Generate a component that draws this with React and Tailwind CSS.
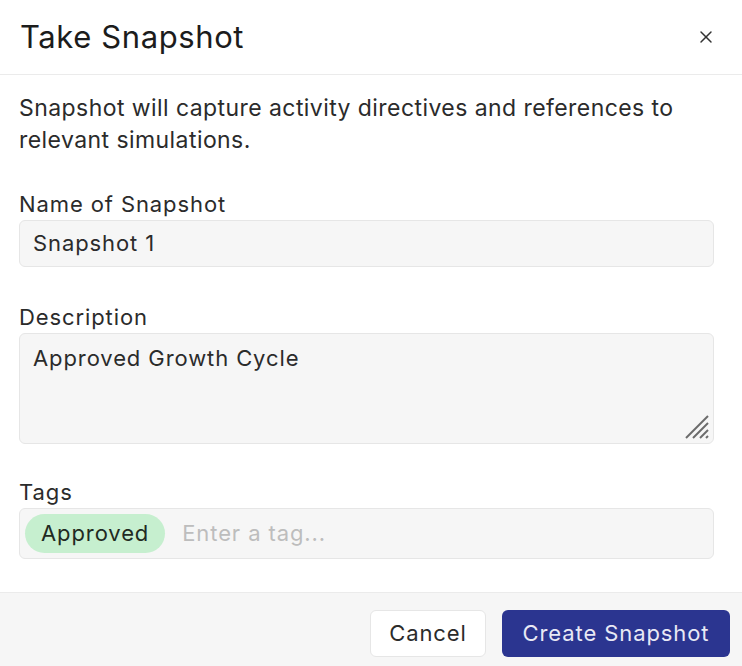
import { X } from 'lucide-react'

function Field({ label, children, className = '' }) {
  return (
    <div className={`flex flex-col ${className}`}>
      <label className="text-[22px] leading-[28px] tracking-[0.9px] text-[#2b2b2b] mb-[2px]">{label}</label>
      {children}
    </div>
  )
}

export default function App() {
  return (
    <div className="w-[742px] h-[666px] bg-white flex flex-col font-['Inter',sans-serif] text-[#2b2b2b]">
      <div className="h-[75px] flex items-center justify-between pl-[20px] pr-[26px] border-b border-[#ebebeb]">
        <h1 className="text-[31px] tracking-[0.6px] text-[#1c1c1c]">Take Snapshot</h1>
        <X className="w-[20px] h-[20px] text-[#333]" strokeWidth={1.75} />
      </div>
      <div className="flex-1 px-[19px] pt-[17px]">
        <p className="text-[23px] leading-[32px] tracking-[0.43px]">
          Snapshot will capture activity directives and references to relevant simulations.
        </p>
        <Field label="Name of Snapshot" className="mt-[34px]">
          <div className="h-[47px] w-[695px] rounded-[6px] bg-[#f6f6f6] border border-[#e6e6e6] flex items-center px-[13px] text-[22px] tracking-[0.9px]">
            Snapshot 1
          </div>
        </Field>
        <Field label="Description" className="mt-[36px]">
          <div className="relative h-[111px] w-[695px] rounded-[6px] bg-[#f6f6f6] border border-[#e6e6e6] px-[13px] pt-[8px] text-[22px] tracking-[0.9px]">
            Approved Growth Cycle
            <svg className="absolute right-[3px] bottom-[3px]" width="26" height="26" viewBox="0 0 26 26">
              <g stroke="#6b6b6b" strokeWidth="2">
                <line x1="2" y1="24" x2="24" y2="2" />
                <line x1="9" y1="24" x2="24" y2="9" />
                <line x1="16" y1="24" x2="24" y2="16" />
                <line x1="22" y1="24" x2="24" y2="22" />
              </g>
            </svg>
          </div>
        </Field>
        <Field label="Tags" className="mt-[34px]">
          <div className="h-[51px] w-[695px] rounded-[6px] bg-[#f6f6f6] border border-[#e6e6e6] flex items-center px-[5px] gap-[17px] text-[22px] tracking-[0.9px]">
            <span className="h-[39px] rounded-full bg-[#c6efcf] px-[16px] flex items-center text-[#1f2a22]">Approved</span>
            <span className="text-[#bdbdbd]">Enter a tag...</span>
          </div>
        </Field>
      </div>
      <div className="h-[74px] bg-[#f6f6f6] border-t border-[#ebebeb] flex items-center justify-end gap-[16px] pr-[12px] pt-[8px]">
        <button className="h-[47px] w-[116px] rounded-[6px] bg-white border border-[#e6e6e6] text-[22px] tracking-[0.9px] text-[#2b2b2b]">
          Cancel
        </button>
        <button className="h-[47px] w-[228px] rounded-[6px] bg-[#2b3590] text-[22px] tracking-[0.9px] text-[#e8e9f5]">
          Create Snapshot
        </button>
      </div>
    </div>
  )
}
